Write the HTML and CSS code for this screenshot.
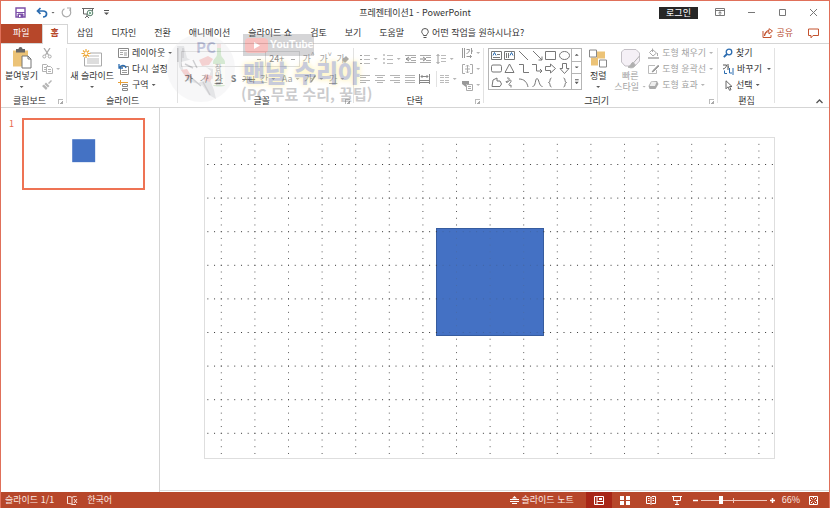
FILE: index.html
```
<!DOCTYPE html>
<html lang="ko">
<head>
  <meta charset="UTF-8">
  <meta name="viewport" content="width=device-width, initial-scale=1.0">
  <title>프레젠테이션1 - PowerPoint</title>
  <link rel="stylesheet" href="styles.css">
</head>
<body>
  <header class="titlebar">
    <div class="quick">
      <button aria-label="저장"><svg width="11" height="11" viewBox="0 0 11 11"><path d="M1 1h9v9H1z" fill="#fff" stroke="#7b4fa8" stroke-width="1.4"/><path d="M1 5.500h9M3 7h5v3H3z" fill="#7b4fa8" stroke="#7b4fa8"/><path d="M4 8h1.500v2H4z" fill="#fff"/></svg></button>
      <button class="undo" aria-label="실행 취소"><svg width="12" height="11" viewBox="0 0 12 11"><path d="M4.500 1 1.500 4l3 3M1.500 4H7c5 0 4.500 6 0 6" fill="none" stroke="#2b6cb0" stroke-width="1.700"/></svg><i class="caret"></i></button>
      <button aria-label="다시 실행"><svg width="11" height="11" viewBox="0 0 11 11"><path d="M3.500 1.700A4.300 4.300 0 1 0 8.500 2.500M6 1h3.500v3.500" fill="none" stroke="#aaa" stroke-width="1.200"/></svg></button>
      <button aria-label="처음부터 시작"><svg width="12" height="12" viewBox="0 0 12 12" fill="none" stroke="#666"><path d="M0 1.500h12M1.500 2v5h4M10.500 2v2M5 7v2.500M3 11l2-2 2 2"/><circle cx="8" cy="6" r="2.800" fill="#fff" stroke="#59806b"/><path d="M7.300 4.500v3L9.500 6z" fill="#3a8a5c" stroke="none"/></svg></button>
      <button aria-label="빠른 실행 도구 모음 사용자 지정"><svg width="5" height="6" viewBox="0 0 5 6"><path d="M0 .5h5" stroke="#555"/><path d="M0 2.500h5L2.500 5z" fill="#555"/></svg></button>
    </div>
    <h1>프레젠테이션1 - PowerPoint</h1>
    <div class="window-tools">
      <button class="login">로그인</button>
      <button aria-label="리본 메뉴 표시 옵션"><svg width="11" height="9" viewBox="0 0 11 9" fill="none" stroke="#777"><path d="M.5.500h9v7h-9zM.5 2.500h9M3.500 5 5 3.700 6.500 5M5 4v3"/></svg></button>
      <button aria-label="최소화"><svg width="9" height="9" viewBox="0 0 9 9"><path d="M1 4.500h7" stroke="#777"/></svg></button>
      <button aria-label="최대화"><svg width="9" height="9" viewBox="0 0 9 9"><path d="M1.500 1.500h6v6h-6z" fill="none" stroke="#777"/></svg></button>
      <button aria-label="닫기"><svg width="9" height="9" viewBox="0 0 9 9"><path d="m1 1 7 7M8 1 1 8" stroke="#777"/></svg></button>
    </div>
  </header>

  <nav class="tabs">
    <a href="#" class="file">파일</a>
    <a href="#" class="active">홈</a>
    <a href="#">삽입</a>
    <a href="#">디자인</a>
    <a href="#">전환</a>
    <a href="#">애니메이션</a>
    <a href="#">슬라이드 쇼</a>
    <a href="#">검토</a>
    <a href="#">보기</a>
    <a href="#">도움말</a>
    <button class="tell-me"><svg width="8" height="11" viewBox="0 0 8 11" fill="none" stroke="#555"><path d="M2.500 7.500C2.500 6 .7 5.500.7 3.700a3.300 3.200 0 0 1 6.600 0C7.300 5.500 5.500 6 5.500 7.500zM2.500 9.500h3"/></svg>어떤 작업을 원하시나요?</button>
    <button class="share"><svg width="11" height="10" viewBox="0 0 11 10" fill="none" stroke="#c4532f"><path d="M1 3v6.500h8V7M2.500 8C3 5 5 3.700 7 3.700V6l3.500-3L7 .7v1.800C4 2.500 2.500 5 2.500 8z"/></svg>공유</button>
    <button class="comment" aria-label="메모"><svg width="11" height="11" viewBox="0 0 11 11"><path d="M.5 1h10v6.500H5L3 9.800V7.500H.5z" fill="none" stroke="#c4532f"/></svg></button>
  </nav>

  <section class="ribbon">
    <div class="group">
      <div class="tools clipboard">
        <button class="big"><svg width="20" height="22" viewBox="0 0 20 22"><path d="M1 3h15v16H1z" fill="#ecc377"/><path d="M4 1.500h2.500a2 2 0 0 1 4 0H13V5H4z" fill="#666"/><path d="M10 8.500h6l3 3v9h-9z" fill="#fff" stroke="#777"/><path d="M16 8.500v3h3" fill="none" stroke="#777"/></svg>붙여넣기<i class="caret"></i></button>
        <div class="stack">
          <button aria-label="잘라내기"><svg width="10" height="11" viewBox="0 0 10 11" fill="none" stroke="#aaa"><path d="m2 0 4.500 7M8 0 3.500 7" stroke-width="1.300"/><circle cx="2.300" cy="8.500" r="1.500"/><circle cx="7.700" cy="8.500" r="1.500"/></svg></button>
          <button aria-label="복사"><svg width="11" height="10" viewBox="0 0 11 10" fill="#fff" stroke="#b3b3b3"><path d="M.5.500h4l1.500 1.500v5.500H.5z"/><path d="M4.500 2.500h4l2 2v5h-6zM6 5.500h3M6 7.500h3M2 3.500h2M2 5.500h2"/></svg><i class="caret"></i></button>
          <button aria-label="서식 복사"><svg width="10" height="10" viewBox="0 0 10 10"><path d="m6 3 3-3 1 1-3 3zM4 2.500 7.500 6 6 7.500 2.500 4zM2 4.500 5.500 8 4 10 0 6z" fill="#b5b5b5"/></svg></button>
        </div>
      </div>
      <div class="group-name"><span>클립보드</span><button class="launcher" aria-label="클립보드 창"></button></div>
    </div>

    <div class="group">
      <div class="tools slides">
        <button class="big"><svg width="22" height="20" viewBox="0 0 22 20"><path d="M3.500 4.500h17v13h-17z" fill="#fff" stroke="#aaa"/><path d="M6 7.500h12M6 10.500h12M6 12.500h12M6 14.500h12" stroke="#bbb"/><circle cx="5" cy="5" r="4" fill="#fff"/><path d="M5 .5v9M.5 5h9M2 2l6 6M8 2 2 8" stroke="#eda93b" stroke-width="1.200"/><circle cx="5" cy="5" r="1.400" fill="#fff"/></svg>새 슬라이드<i class="caret"></i></button>
        <div class="stack">
          <button><svg width="11" height="10" viewBox="0 0 11 10"><path d="M.5.500h10v9H.5z" fill="#fff" stroke="#888"/><path d="M2 2.500h7M2 4.500h3M2 6.500h3" stroke="#aaa"/><path d="M6 4h3v4H6z" fill="#ccc"/></svg>레이아웃<i class="caret"></i></button>
          <button><svg width="11" height="11" viewBox="0 0 11 11"><path d="M2.500 2.500h8v8h-8z" fill="#fff" stroke="#888"/><path d="M4 6.500h5M4 8.500h5" stroke="#999"/><path d="M1 0v4h4M1.500 3.500C3 .5 7 .5 8 4" fill="none" stroke="#2b6cb0" stroke-width="1.300"/></svg>다시 설정</button>
          <button><svg width="11" height="11" viewBox="0 0 11 11"><path d="M4 2.500h6M0 2.500h5M2.500 0v5" stroke="#e9a038"/><path d="M4.500 4.500h5v2h-5zM4.500 8.500h5v2h-5z" fill="#fff" stroke="#888"/></svg>구역<i class="caret"></i></button>
        </div>
      </div>
      <div class="group-name"><span>슬라이드</span></div>
    </div>

    <div class="group">
      <div class="tools font">
        <div class="row">
          <select class="font-name" aria-label="글꼴"><option></option></select>
          <select class="font-size" aria-label="글꼴 크기"><option>24+</option></select>
          <button class="ga" aria-label="글꼴 크기 크게">가<sup>^</sup></button>
          <button class="ga" aria-label="글꼴 크기 작게">가<sup>˅</sup></button>
          <button class="ga clear" aria-label="모든 서식 지우기">가<svg width="7" height="7" viewBox="0 0 7 7"><path d="m0 4 4-4 3 3-4 4z" fill="#aaa"/></svg></button>
        </div>
        <div class="row">
          <button class="mini bold">가</button>
          <button class="mini italic">가</button>
          <button class="mini underline">가</button>
          <button class="mini bold">S</button>
          <button class="mini strike">가나</button>
          <button class="wide">간<i class="caret"></i></button>
          <button class="wide">Aa<i class="caret"></i></button>
          <button class="wide highlight">가<svg width="6" height="8" viewBox="0 0 6 8"><path d="M5.500.500 1 7" stroke="#999" stroke-width="1.500"/></svg><i class="caret"></i></button>
          <button class="wide"><u>가</u><i class="caret"></i></button>
        </div>
      </div>
      <div class="group-name"><span>글꼴</span><button class="launcher" aria-label="글꼴 설정"></button></div>
    </div>

    <div class="group">
      <div class="tools paragraph">
        <div class="rows">
          <div class="row">
            <button class="wide" aria-label="글머리 기호"><svg width="10" height="10" viewBox="0 0 10 10"><path d="M0 1.500h2M0 5.500h2M0 9.500h2" stroke="#999"/><path d="M4 1.500h6M4 5.500h6M4 9.500h6" stroke="#bbb"/></svg><i class="caret"></i></button>
            <button class="wide" aria-label="번호 매기기"><svg width="10" height="10" viewBox="0 0 10 10"><path d="M1 0v2M1 4v2M1 8v2" stroke="#999"/><path d="M4 1.500h6M4 5.500h6M4 9.500h6" stroke="#bbb"/></svg><i class="caret"></i></button>
            <button class="mini" aria-label="목록 수준 줄임"><svg width="11" height="8" viewBox="0 0 11 8"><path d="M0 .5h11M6 2.500h5M6 5.500h5M0 7.500h11" stroke="#aaa"/><path d="M4 2 1 4l3 2M1 4h5" fill="none" stroke="#888"/></svg></button>
            <button class="mini" aria-label="목록 수준 늘림"><svg width="11" height="8" viewBox="0 0 11 8"><path d="M0 .5h11M6 2.500h5M6 5.500h5M0 7.500h11" stroke="#aaa"/><path d="m3 2 3 2-3 2M0 4h5" fill="none" stroke="#888"/></svg></button>
            <button class="wide" aria-label="줄 간격"><svg width="10" height="10" viewBox="0 0 10 10"><path d="M2 .5v9M.5 2 2 .5 3.500 2M.5 8 2 9.500 3.500 8" fill="none" stroke="#999"/><path d="M5 1.500h5M5 4.500h5M5 7.500h5" stroke="#bbb"/></svg><i class="caret"></i></button>
          </div>
          <div class="row">
            <button class="mini" aria-label="왼쪽 맞춤"><svg width="10" height="8" viewBox="0 0 10 8"><path d="M0 .5h10M0 2.500h6M0 5.500h10M0 7.500h6" stroke="#b5b5b5"/></svg></button>
            <button class="mini" aria-label="가운데 맞춤"><svg width="10" height="8" viewBox="0 0 10 8"><path d="M0 .5h10M2 2.500h6M0 5.500h10M2 7.500h6" stroke="#b5b5b5"/></svg></button>
            <button class="mini" aria-label="오른쪽 맞춤"><svg width="10" height="8" viewBox="0 0 10 8"><path d="M0 .5h10M4 2.500h6M0 5.500h10M4 7.500h6" stroke="#b5b5b5"/></svg></button>
            <button class="mini" aria-label="양쪽 맞춤"><svg width="10" height="8" viewBox="0 0 10 8"><path d="M0 .5h10M0 2.500h10M0 5.500h10M0 7.500h10" stroke="#b5b5b5"/></svg></button>
            <button class="mini" aria-label="균등 분할"><svg width="11" height="10" viewBox="0 0 11 10" fill="none" stroke="#888"><path d="M.5 0v10M10.500 0v10M2 2.500h7M3.500 1 2 2.500 3.500 4M7.500 1 9 2.500 7.500 4M1 6.500h9M1 8.500h9"/></svg></button>
            <button class="wide columns" aria-label="단 추가 또는 제거"><svg width="9" height="8" viewBox="0 0 9 8"><path d="M0 .5h4M0 2.500h4M0 5.500h4M0 7.500h4M5 .5h4M5 2.500h4M5 5.500h4M5 7.500h4" stroke="#bbb"/></svg><i class="caret"></i></button>
          </div>
        </div>
        <div class="stack">
          <button aria-label="텍스트 방향"><svg width="11" height="11" viewBox="0 0 11 11" fill="none" stroke="#999"><path d="M.5 0v10M2.500 0v10M4.500 1.500h3c0 2-1 3.500-3 4M9.500 0v6M9.500 3H11M4.500 8.500h5M8 7l1.500 1.500L8 10"/></svg><i class="caret"></i></button>
          <button aria-label="텍스트 맞춤"><svg width="11" height="10" viewBox="0 0 11 10" fill="none" stroke="#aaa"><path d="M3 .5H.5v9H3M8 .5h2.500v9H8M5.500 1v8M4 2.500 5.500 1 7 2.500M4 7.500 5.500 9 7 7.500M3 5h5"/></svg><i class="caret"></i></button>
          <button aria-label="SmartArt로 변환"><svg width="11" height="11" viewBox="0 0 11 11"><path d="M0 1h7v3H4v3L0 4z" fill="#999"/><path d="M4.500 4.500h6v6h-6zM6 6.500h3M6 8.500h3" fill="#fff" stroke="#aaa"/></svg><i class="caret"></i></button>
        </div>
      </div>
      <div class="group-name"><span>단락</span><button class="launcher" aria-label="단락 설정"></button></div>
    </div>

    <div class="group">
      <div class="tools drawing">
        <div class="gallery">
          <div class="shapes">
            <button aria-label="텍스트 상자"><svg viewBox="0 0 11 11"><path d="M.5 1.500h10v8H.5z"/><path d="M6 4.500h3M2 7.500h7"/><path class="blue" d="m2 5.500 1.500-3L5 5.500"/></svg></button>
            <button aria-label="세로 텍스트 상자"><svg viewBox="0 0 11 11"><path d="M.5 1.500h10v8H.5z"/><path d="M2.500 3v5M4.500 3v5"/><path class="blue" d="m6 5.500 1.500-3L9 5.500"/></svg></button>
            <button aria-label="선"><svg viewBox="0 0 11 11"><path d="m1 1 9 9"/></svg></button>
            <button aria-label="화살표"><svg viewBox="0 0 11 11"><path d="m1 1 9 9M10 6.500V10H6.500"/></svg></button>
            <button aria-label="직사각형"><svg viewBox="0 0 11 11"><path d="M.5 1.500h10v8H.5z"/></svg></button>
            <button aria-label="타원"><svg viewBox="0 0 11 11"><ellipse cx="5.500" cy="5.500" rx="5" ry="4"/></svg></button>
            <button aria-label="둥근 직사각형"><svg viewBox="0 0 11 11"><rect x=".5" y="2" width="10" height="7" rx="1.500"/></svg></button>
            <button aria-label="삼각형"><svg viewBox="0 0 11 11"><path d="M5.500 1 10 9.500H1z"/></svg></button>
            <button aria-label="꺾인 연결선"><svg viewBox="0 0 11 11"><path d="M1 1.500h4.500v8H11"/></svg></button>
            <button aria-label="꺾인 화살표"><svg viewBox="0 0 11 11"><path d="M0 1.500h4.500v6.500H10M8 6l2 2-2 2"/></svg></button>
            <button aria-label="오른쪽 화살표"><svg viewBox="0 0 11 11"><path d="M.5 3.500h5V1l5 4.500-5 4.500V7.500h-5z"/></svg></button>
            <button aria-label="아래쪽 화살표"><svg viewBox="0 0 11 11"><path d="M3.500.500v5H1l4.500 5 4.500-5H7.500v-5z"/></svg></button>
            <button aria-label="자유형"><svg viewBox="0 0 11 11"><path d="M1 9.500 2 3l4-2v3h3l1.500 3L9 9.500z"/></svg></button>
            <button aria-label="자유 곡선"><svg viewBox="0 0 11 11"><path d="M3 1c3 0 3 1 1 2.500S3 6 5 4s3 0 1 2-1 3 1 2v2.500M2 4l1 2"/></svg></button>
            <button aria-label="호"><svg viewBox="0 0 11 11"><path d="M1 2c5 0 8 3 9 8"/></svg></button>
            <button aria-label="곡선"><svg viewBox="0 0 11 11"><path d="M.5 9.500C4 9.500 3 1.500 5 1.500s2 8 5.500 8"/></svg></button>
            <button aria-label="왼쪽 중괄호"><svg viewBox="0 0 11 11"><path d="M6.500 1C4 1 6 5.500 3.500 5.500 6 5.500 4 10 6.500 10"/></svg></button>
            <button aria-label="오른쪽 중괄호"><svg viewBox="0 0 11 11"><path d="M4.500 1C7 1 5 5.500 7.500 5.500 5 5.500 7 10 4.500 10"/></svg></button>
          </div>
          <div class="scroller">
            <button aria-label="위로"><i class="caret up"></i></button>
            <button aria-label="아래로"><i class="caret"></i></button>
            <button aria-label="자세히"><i class="caret more"></i></button>
          </div>
        </div>
        <button class="big arrange"><svg width="20" height="20" viewBox="0 0 20 20"><path d="M9 3h8v7H9zM3 9h7v8H3z" fill="#ecc377"/><path d="M1.500 1.500h7v7h-7zM11.500 11.500h7v7h-7z" fill="#fff" stroke="#888"/></svg>정렬<i class="caret"></i></button>
        <button class="big off"><svg width="21" height="21" viewBox="0 0 21 21"><path d="M4 1.500h12L19.500 5v8L15 18H5l-3.500-4V4z" fill="#f5f0f6" stroke="#c4c0c6"/><path d="m19.500 8-7 8M13 14.500c-2 0-2 4-5 4.500 3 1.500 7 1 7-2.500z" fill="#b0b0b0" stroke="#b0b0b0"/></svg>빠른<span>스타일<i class="caret"></i></span></button>
        <div class="stack off">
          <button><svg width="11" height="11" viewBox="0 0 11 11"><path d="M4.500 1.500 8.500 5 5 8 1.500 4.500zM4.500 4V.500M9.500 5v3" fill="#fff" stroke="#aaa"/><path d="M0 9h11v2H0z" fill="#bbb"/></svg>도형 채우기<i class="caret"></i></button>
          <button><svg width="11" height="11" viewBox="0 0 11 11"><path d="M7 1.500H.5v8h8V6" fill="#fff" stroke="#bbb"/><path d="m10.500 1-5 5L4 8l2-1 5-5" stroke="#999" fill="#999"/></svg>도형 윤곽선<i class="caret"></i></button>
          <button><svg width="11" height="11" viewBox="0 0 11 11"><path d="m3 1.500 6-.500 1.500 3-3 5-6 0L.5 6z" fill="#aaa"/><path d="M3.500 2h5L7 6H1.500z" fill="#eee"/></svg>도형 효과<i class="caret"></i></button>
        </div>
      </div>
      <div class="group-name"><span>그리기</span><button class="launcher" aria-label="도형 서식"></button></div>
    </div>

    <div class="group">
      <div class="tools editing">
        <div class="stack">
          <button><svg width="10" height="10" viewBox="0 0 10 10"><circle cx="6" cy="4" r="2.800" fill="none" stroke="#2b6cb0" stroke-width="1.300"/><path d="M4 6 .8 9.200" stroke="#2b6cb0" stroke-width="1.800"/></svg>찾기</button>
          <button class="replace"><svg width="11" height="11" viewBox="0 0 11 11" fill="none"><path d="M0 1h3.500C3.500 3 2 4.500 0 5M5 0v6M5 3h1" stroke="#555"/><path d="M6.500 4v5H9M10 4v7M1.500 6.500v3H4" stroke="#2b6cb0"/></svg>바꾸기<i class="caret"></i></button>
          <button><svg width="10" height="11" viewBox="0 0 10 11"><path d="M3 .8v8l2-2 1.500 3.500L8 9.600 6.500 6.500H9z" fill="#fff" stroke="#666"/></svg>선택<i class="caret"></i></button>
        </div>
      </div>
      <div class="group-name"><span>편집</span></div>
    </div>

    <button class="collapse" aria-label="리본 메뉴 축소"><svg width="7" height="5" viewBox="0 0 7 5"><path d="m.5 4 3-3 3 3" fill="none" stroke="#555" stroke-width="1.300"/></svg></button>

    <div class="channel-mark" aria-hidden="true">
      <div class="badge">
        <svg width="68" height="68" viewBox="0 0 68 68">
          <circle cx="34" cy="34" r="34" fill="#e8e8ea"/>
          <path d="M10 12h7l3 12 14 8 12 3 3 8-6 3 4 10 2 9-7-4-7-10-14-4-9-14z" fill="#a9aab2"/>
          <path d="m14 28 12-3 13 8 5 4-3 8-10 4-13-8z" fill="#f0eef0"/>
          <path d="m32 26 9-4 5 3-4 6-7 1zM14 36l6-1 5 8-5 1zM38 40l7 2-2 6-6-2z" fill="#dc6a6a"/>
          <path d="M11 14v14M16 14v10M20 40l14 12M36 48l7 13M26 26l4 8M18 30l8 4" stroke="#63636c" stroke-width="1.500"/>
          <path d="M50 12h4v8c0 4 4 4 4 9v22c0 2-12 2-12 0V29c0-5 4-5 4-9z" fill="#76b76c"/>
          <path d="M46 30h12v21H46z" fill="#f4f4e8"/>
          <path d="M50 10h4v4h-4z" fill="#dfa2a2"/>
        </svg>
        <b class="pc">PC</b>
        <b class="soju">참이슬</b>
      </div>
      <div class="channel">
        <div class="tube"><svg width="23" height="15" viewBox="0 0 23 15"><rect width="23" height="15" rx="4" fill="#e8322d"/><path d="m9 4 6 3.500L9 11z" fill="#fff"/></svg><b>YouTube</b></div>
        <strong>맨날 수리야</strong>
        <em>(PC 무료 수리, 꿀팁)</em>
      </div>
    </div>
  </section>

  <main>
    <aside class="thumbs">
      <span>1</span>
      <a href="#" class="thumb" aria-label="슬라이드 1"><svg viewBox="0 0 570 326"><rect x="231" y="92" width="110" height="110" fill="#4472c4"/></svg></a>
    </aside>
    <section class="stage">
      <!-- 33.6 unit guides, one dot every fifth of a cell -->
      <svg class="slide" viewBox="0 0 569 320">
        <defs>
          <pattern id="across" x="15.800" y="26" width="6.720" height="33.600" patternUnits="userSpaceOnUse"><path d="M0 0h1v1H0z" fill="#333"/></pattern>
          <pattern id="down" x="15.800" y="26" width="33.600" height="6.720" patternUnits="userSpaceOnUse"><path d="M0 0h1v1H0z" fill="#555"/></pattern>
        </defs>
        <rect x="231.500" y="90.500" width="107" height="107" fill="#4472c4" stroke="#365c9f"/>
        <rect x="1" y="5" width="567" height="312" fill="url(#across)"/>
        <rect x="1" y="5" width="567" height="312" fill="url(#down)"/>
        <rect x="232" y="91" width="106" height="106" fill="#4472c4" opacity=".75"/>
      </svg>
    </section>
  </main>

  <footer class="status">
    <span>슬라이드 1/1</span>
    <button class="spell" aria-label="맞춤법 검사"><svg width="11" height="9" viewBox="0 0 11 9" fill="none" stroke="#fbe5de"><path d="M5 1.500C4 .5 2 .5.500.500v7C2 7.500 4 7.500 5 8.500zM5 1.500C6 .5 8 .5 9.500.500M5 8.500h4M7 3l3 4M10 3 7 7"/></svg></button>
    <button>한국어</button>
    <button class="notes"><svg width="9" height="8" viewBox="0 0 9 8"><path d="M0 3.500h9M0 5.500h9M2 7.500h5" stroke="#fff"/><path d="M2 2.500 4.500 0 7 2.500z" fill="#fff"/></svg>슬라이드 노트</button>
    <button class="view on" aria-label="기본"><svg width="10" height="9" viewBox="0 0 10 9" fill="none" stroke="#fff"><path d="M.5.500h9v8h-9zM3 0v9M3 5.500h6"/><path d="M5 2h3v2H5z" fill="#fff" stroke="none"/></svg></button>
    <button class="view" aria-label="여러 슬라이드"><svg width="10" height="9" viewBox="0 0 10 9"><path d="M0 0h4v4H0zM6 0h4v4H6zM0 5h4v4H0zM6 5h4v4H6z" fill="#fff"/></svg></button>
    <button class="view" aria-label="읽기용 보기"><svg width="10" height="9" viewBox="0 0 10 9" fill="none" stroke="#fff"><path d="M.5.500H4l1 1 1-1h3.500v7H6l-1 1-1-1H.5zM5 1v7M2 2.500h1.500M2 4.500h1.500M6.500 2.500H8M6.500 4.500H8"/></svg></button>
    <button class="view" aria-label="슬라이드 쇼"><svg width="10" height="9" viewBox="0 0 10 9" fill="none" stroke="#fff"><path d="M0 .5h10M1.500 1v3.500h7V1M5 5v3M3 8.500h4"/></svg></button>
    <button class="zoom-step" aria-label="축소"><svg width="5" height="5" viewBox="0 0 5 5"><path d="M0 2.500h5" stroke="#fff" stroke-width="1.500"/></svg></button>
    <input type="range" min="0" max="100" value="30" aria-label="확대/축소">
    <button class="zoom-step" aria-label="확대"><svg width="5" height="5" viewBox="0 0 5 5"><path d="M0 2.500h5M2.500 0v5" stroke="#fff" stroke-width="1.500"/></svg></button>
    <button class="percent">66%</button>
    <button class="fit" aria-label="창에 맞춤"><svg width="9" height="9" viewBox="0 0 9 9" fill="none" stroke="#fff"><path d="M.5.500h8v8h-8zM2 2l1.500 1.500M7 2 5.500 3.500M2 7l1.500-1.500M7 7 5.500 5.500M4.500 0v2M4.500 7v2M0 4.500h2M7 4.500h2"/></svg></button>
  </footer>
</body>
</html>
```

FILE: styles.css
```
/* Reset */
* {
  box-sizing: border-box;
}

body {
  margin: 0;
  height: 100vh;
  display: flex;
  flex-direction: column;
  border: 1px solid #e0705a;
  border-bottom: 0;
  background: #fff;
  color: #333;
  font: 9px/12px "Noto Sans CJK KR", "Open Sans", sans-serif;
  overflow: hidden;
}

button {
  display: flex;
  align-items: center;
  justify-content: center;
  margin: 0;
  padding: 0;
  border: 0;
  background: none;
  color: inherit;
  font: inherit;
  white-space: nowrap;
}

a {
  color: inherit;
  text-decoration: none;
}

svg {
  display: block;
  flex: none;
}

.caret {
  flex: none;
  width: 4px;
  height: 2px;
  background: currentColor;
  opacity: 0.8;
  clip-path: polygon(0 0, 100% 0, 50% 100%);
}

.caret.up {
  clip-path: polygon(50% 0, 100% 100%, 0 100%);
}

.caret.more {
  height: 5px;
  clip-path: polygon(0 0, 100% 0, 100% 20%, 0 20%, 0 50%, 100% 50%, 50% 100%, 0 50%);
}

/* --- Title bar --- */
.titlebar {
  display: grid;
  grid-template-columns: 1fr auto 1fr;
  align-items: center;
  height: 23px;
}

.titlebar h1 {
  margin: 0;
  font-size: 9px;
  font-weight: 400;
}

.quick {
  display: flex;
  align-items: center;
  gap: 10px;
  padding-left: 14px;
}

.quick .undo {
  gap: 3px;
  margin-right: -4px;
}

.window-tools {
  display: flex;
  justify-content: flex-end;
  align-items: center;
}

.window-tools button {
  width: 31px;
}

.window-tools .login {
  width: 39px;
  height: 12px;
  margin-right: 7px;
  background: #262626;
  color: #fff;
}

/* --- Tabs --- */
.tabs {
  display: flex;
  height: 20px;
  border-bottom: 1px solid #d5d5d5;
}

.tabs a {
  padding: 3px 9px;
  height: 19px;
}

.tabs .file {
  padding: 3px 12px;
  background: #b7472a;
  color: #fff;
}

.tabs .active {
  height: 20px;
  border: 1px solid #d5d5d5;
  border-bottom: 0;
  padding: 2px 8px;
  background: #fff;
  color: #b7472a;
  font-weight: 700;
}

.tabs button {
  gap: 3px;
  height: 18px;
}

.tabs .tell-me {
  padding-left: 8px;
}

.tabs .share {
  margin-left: auto;
  color: #b7472a;
}

.tabs .comment {
  width: 32px;
  margin-left: 4px;
}

/* --- Ribbon --- */
.ribbon {
  position: relative;
  display: flex;
  height: 64px;
  border-bottom: 1px solid #d5d5d5;
}

.group {
  display: flex;
  flex-direction: column;
  position: relative;
}

.group::after {
  content: "";
  position: absolute;
  right: 0;
  top: 4px;
  bottom: 4px;
  border-right: 1px solid #e2e2e2;
}

.tools {
  display: flex;
  height: 51px;
}

.group-name {
  display: flex;
  align-items: center;
  height: 12px;
}

.group-name span {
  flex: 1;
  text-align: center;
}

.launcher {
  width: 5px;
  height: 5px;
  margin-right: 4px;
  border-left: 1px solid #bbb;
  border-top: 1px solid #bbb;
  background: linear-gradient(135deg, transparent 60%, #aaa 60%);
}

.big {
  flex-direction: column;
  justify-content: flex-start;
  padding-top: 3px;
  line-height: 11px;
}

.big svg {
  height: 23px;
}

.big > .caret {
  margin-top: 5px;
}

.big span {
  display: flex;
  align-items: center;
  gap: 3px;
}

.stack {
  display: grid;
  grid-auto-rows: 16px;
  align-content: start;
  justify-items: start;
  padding-top: 1px;
}

.stack button {
  gap: 3px;
}

.off,
.font,
.paragraph {
  color: #a3a3a3;
}

.clipboard {
  gap: 4px;
  padding: 0 5px 0 4px;
}

.clipboard .stack {
  width: 20px;
  color: #aaa;
}

.slides {
  gap: 4px;
  padding: 0 6px 0 3px;
}

/* Font */
.font {
  flex-direction: column;
  padding: 5px 3px 0;
}

.row {
  display: flex;
  align-items: center;
  height: 20px;
}

.font select {
  appearance: none;
  height: 16px;
  padding: 0 3px;
  border: 1px solid #ddd;
  border-radius: 0;
  background: linear-gradient(#aaa, #aaa) right 4px center / 4px 1px no-repeat;
  color: #888;
  font: inherit;
}

.font .font-name {
  width: 85px;
}

.font .font-size {
  width: 35px;
  margin-left: -1px;
}

.ga {
  width: 17px;
  height: 16px;
}

.ga sup {
  font-size: 7px;
  line-height: 7px;
  align-self: flex-start;
}

.ga svg {
  margin-left: -3px;
}

.mini {
  width: 15px;
  height: 16px;
}

.wide {
  width: 23px;
  height: 16px;
  gap: 4px;
}

.font .mini {
  color: #777;
}

.font .wide {
  gap: 3px;
}

.font .highlight svg {
  margin-left: -5px;
}

.bold {
  font-weight: 700;
}

.italic {
  font-style: italic;
}

.underline {
  text-decoration: underline;
}

.font .strike {
  text-decoration: line-through;
  font-size: 7px;
}

/* Paragraph */
.paragraph {
  gap: 3px;
  padding: 0 4px 0 3px;
}

.rows {
  padding-top: 5px;
}

.columns {
  margin-left: 4px;
  border-left: 1px solid #e2e2e2;
}

/* Drawing */
.drawing {
  padding: 0 5px 0 4px;
}

.gallery {
  display: flex;
  height: 42px;
  margin-top: 4px;
  border: 1px solid #b5b5b5;
}

.shapes {
  display: grid;
  grid-template-columns: repeat(6, 1fr);
  width: 82px;
}

.shapes svg {
  width: 11px;
  height: 11px;
  fill: none;
  stroke: #777;
}

.shapes .blue {
  stroke: #2b6cb0;
  stroke-width: 1;
}

.scroller {
  display: grid;
  width: 10px;
  border-left: 1px solid #b5b5b5;
}

.scroller button + button {
  border-top: 1px solid #b5b5b5;
}

.arrange {
  width: 32px;
}

.drawing .off.big {
  width: 32px;
}

.drawing .stack {
  padding-left: 2px;
}

.editing {
  padding: 0 4px 0 5px;
}

.editing .replace .caret {
  margin-left: 2px;
}

.collapse {
  align-self: flex-end;
  margin: 0 6px 3px auto;
}

/* Channel mark lies over the ribbon */
.channel-mark {
  position: absolute;
  left: 166px;
  top: -10px;
  display: flex;
  gap: 8px;
  opacity: 0.3;
  pointer-events: none;
}

.badge {
  position: relative;
}

.pc {
  position: absolute;
  left: 29px;
  top: 3px;
  color: #34408c;
  font-size: 15px;
  line-height: 20px;
}

.soju {
  position: absolute;
  left: 48px;
  top: 30px;
  width: 8px;
  font-size: 7px;
  line-height: 7px;
}

.channel {
  display: flex;
  flex-direction: column;
  color: #55565c;
  white-space: nowrap;
}

.tube {
  display: flex;
  align-items: center;
  gap: 2px;
  width: 71px;
  height: 22px;
  padding-left: 2px;
  background: #77787e;
  color: #fff;
}

.tube b {
  font-family: Roboto, sans-serif;
  font-size: 11px;
}

.channel strong {
  margin-top: 2px;
  color: #4b5788;
  font-size: 24px;
  font-weight: 900;
  line-height: 28px;
  text-shadow: 0 0 4px #ffe14a, 0 0 6px #ffe14a;
}

.channel em {
  margin-left: -2px;
  font-size: 15px;
  font-style: normal;
  font-weight: 700;
  line-height: 16px;
}

/* --- Workspace --- */
main {
  flex: 1;
  display: flex;
  min-height: 0;
}

.thumbs {
  display: flex;
  align-items: flex-start;
  width: 159px;
  padding: 10px 14px 0 8px;
  border-right: 1px solid #d5d5d5;
  color: #e8684a;
}

.thumbs span {
  width: 13px;
}

.thumb {
  flex: 1;
  border: 2px solid #ee7354;
}

.stage {
  flex: 1;
  display: flex;
  min-width: 0;
  margin-bottom: 1px;
  padding: 29px 54px 31px 44px;
  border-bottom: 1px solid #dcdcdc;
}

.slide {
  flex: 1;
  min-width: 0;
  height: 100%;
  border: 1px solid #dedede;
}

/* --- Status bar --- */
.status {
  display: flex;
  align-items: center;
  height: 16px;
  margin: 0 -1px;
  padding: 0 12px 0 5px;
  background: #b7472a;
  color: #fbe9e4;
}

.status .spell {
  margin: 0 9px 0 13px;
}

.status .notes {
  gap: 3px;
  margin: 0 12px 0 auto;
}

.status .view {
  width: 26px;
  height: 16px;
}

.status .on {
  background: #a82617;
}

.zoom-step {
  width: 11px;
  height: 12px;
}

.status input {
  appearance: none;
  width: 66px;
  height: 8px;
  margin: 0;
  background:
    linear-gradient(#f0c8bc, #f0c8bc) center / 1px 5px no-repeat,
    linear-gradient(#f0c8bc, #f0c8bc) center / 100% 1px no-repeat;
}

.status input::-webkit-slider-thumb {
  appearance: none;
  width: 4px;
  height: 8px;
  background: #fff;
}

.status input::-moz-range-thumb {
  width: 4px;
  height: 8px;
  border: 0;
  border-radius: 0;
  background: #fff;
}

.percent {
  margin: 0 9px 0 4px;
}
```
